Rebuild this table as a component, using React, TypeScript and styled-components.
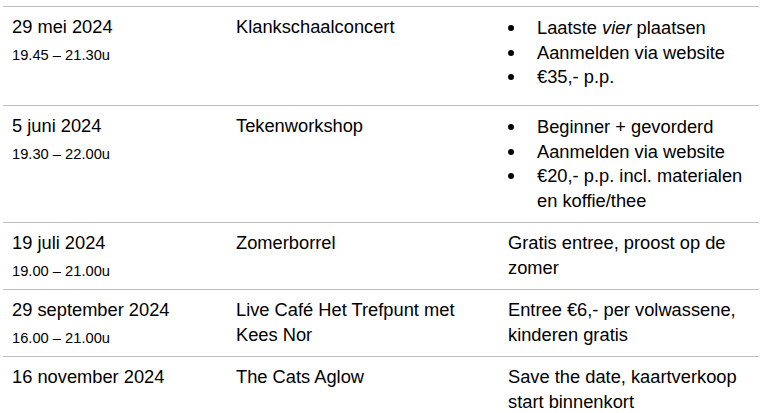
import React from 'react';
import styled, { createGlobalStyle } from 'styled-components';

interface Event {
  date: string;
  time: string;
  title: string;
  bullets?: React.ReactNode[];
  note?: string;
  tall?: boolean;
}

const GlobalStyle = createGlobalStyle`
  * {
    box-sizing: border-box;
  }

  body {
    margin: 0;
    background: #ffffff;
    color: #000000;
    font-family: "Liberation Sans", Arial, sans-serif;
  }
`;

const Table = styled.div`
  margin: 6px 0 0 3px;
  width: 756px;
`;

interface RowProps {
  tall?: boolean;
}

const Row = styled.div<RowProps>`
  display: grid;
  grid-template-columns: 224px 272px 260px;
  border-top: 1px solid #c0c0c0;
  min-height: ${props => (props.tall ? '99px' : '0')};
`;

const Cell = styled.div`
  padding: 7px 3px 9px 9px;
  font-size: 18.3px;
  line-height: 25px;
`;

const DateText = styled.div`
  font-size: 18.3px;
  line-height: 25px;
`;

const TimeText = styled.div`
  margin-top: 7px;
  font-size: 14.7px;
  line-height: 18px;
`;

const BulletList = styled.ul`
  margin: 2px 0 0;
  padding: 0;
  list-style: none;
`;

const BulletItem = styled.li`
  display: flex;
  align-items: flex-start;
  line-height: 24.6px;
`;

const Dot = styled.span`
  flex: 0 0 29px;
  height: 24.6px;
  display: flex;
  align-items: center;

  &::before {
    content: '';
    width: 6px;
    height: 6px;
    border-radius: 50%;
    background: #000000;
  }
`;

const events: Event[] = [
  {
    date: '29 mei 2024',
    time: '19.45 – 21.30u',
    title: 'Klankschaalconcert',
    bullets: [
      <>Laatste <em>vier</em> plaatsen</>,
      'Aanmelden via website',
      '€35,- p.p.',
    ],
    tall: true,
  },
  {
    date: '5 juni 2024',
    time: '19.30 – 22.00u',
    title: 'Tekenworkshop',
    bullets: [
      'Beginner + gevorderd',
      'Aanmelden via website',
      '€20,- p.p. incl. materialen en koffie/thee',
    ],
  },
  {
    date: '19 juli 2024',
    time: '19.00 – 21.00u',
    title: 'Zomerborrel',
    note: 'Gratis entree, proost op de zomer',
  },
  {
    date: '29 september 2024',
    time: '16.00 – 21.00u',
    title: 'Live Café Het Trefpunt met Kees Nor',
    note: 'Entree €6,- per volwassene, kinderen gratis',
  },
  {
    date: '16 november 2024',
    time: '',
    title: 'The Cats Aglow',
    note: 'Save the date, kaartverkoop start binnenkort',
  },
];

const App = () => {
  return (
    <>
      <GlobalStyle />
      <Table>
        {events.map(event => (
          <Row key={event.date} tall={event.tall}>
            <Cell>
              <DateText>{event.date}</DateText>
              {event.time && <TimeText>{event.time}</TimeText>}
            </Cell>
            <Cell>{event.title}</Cell>
            <Cell>
              {event.bullets ? (
                <BulletList>
                  {event.bullets.map((item, i) => (
                    <BulletItem key={i}>
                      <Dot />
                      <span>{item}</span>
                    </BulletItem>
                  ))}
                </BulletList>
              ) : (
                event.note
              )}
            </Cell>
          </Row>
        ))}
      </Table>
    </>
  );
};

export default App;
